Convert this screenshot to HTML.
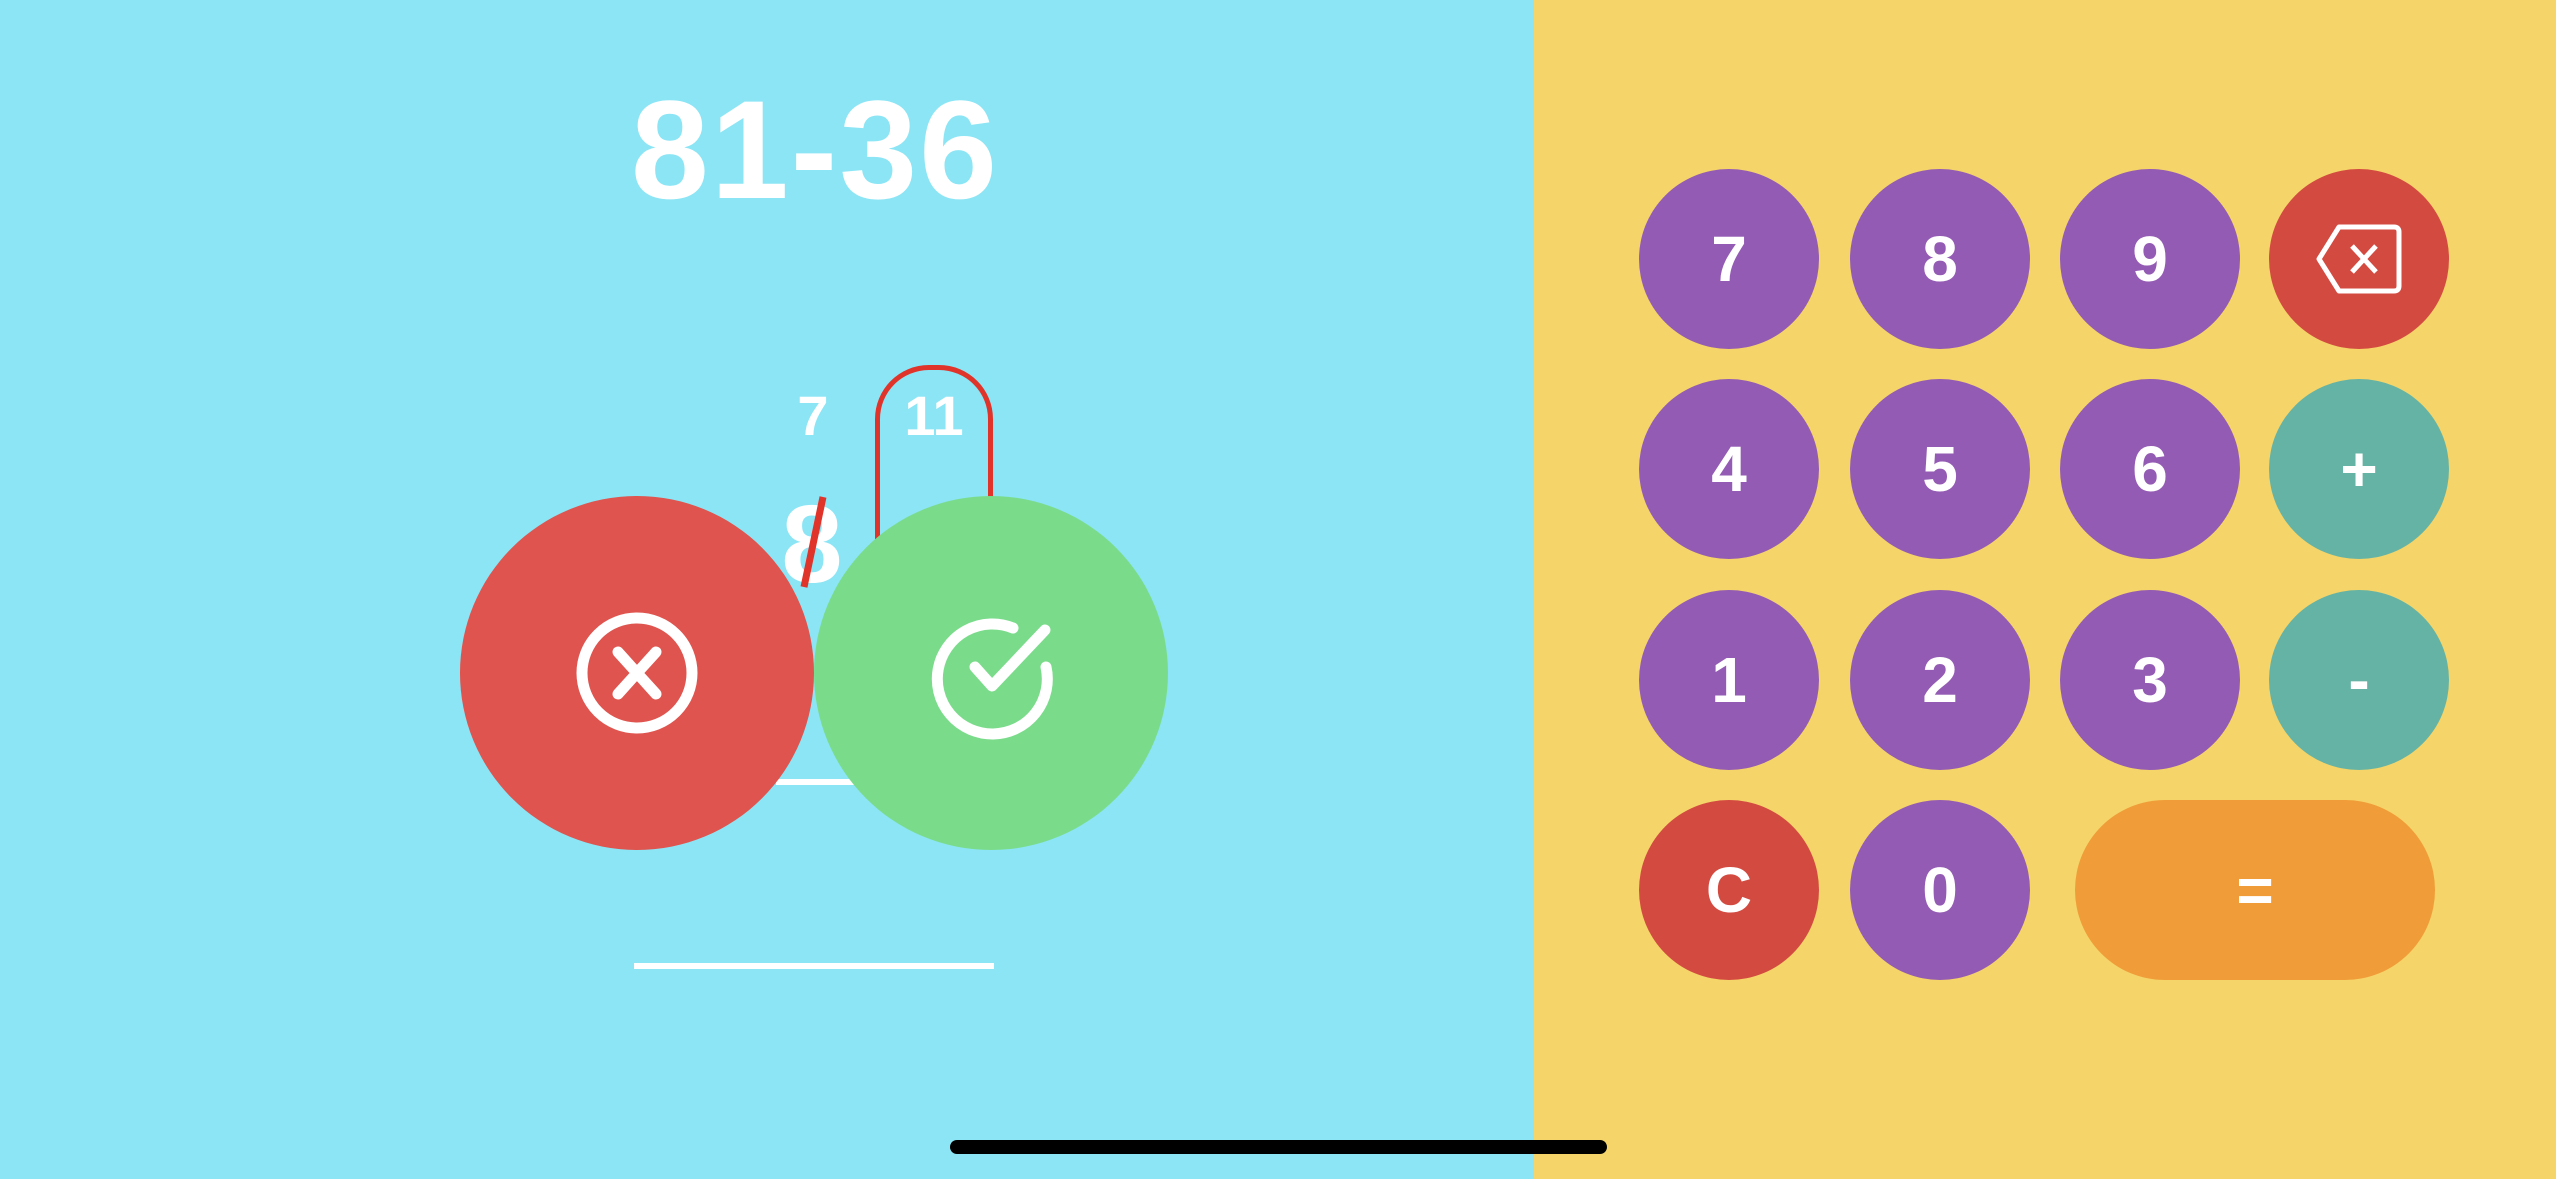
<!DOCTYPE html>
<html><head><meta charset="utf-8"><style>
html,body{margin:0;padding:0;width:2556px;height:1179px;overflow:hidden;font-family:"Liberation Sans",Arial,Helvetica,sans-serif;}
.l{position:absolute;left:0;top:0;width:1534px;height:1179px;background:#8BE5F5;}
.r{position:absolute;left:1534px;top:0;width:1022px;height:1179px;background:#F5D469;}
.t{position:absolute;color:#fff;font-weight:700;text-align:center;line-height:1;font-family:"Liberation Sans",Arial,Helvetica,sans-serif;}
.b{position:absolute;width:180px;height:180px;border-radius:50%;color:#fff;font-weight:700;font-size:64px;display:flex;align-items:center;justify-content:center;font-family:"Liberation Sans",Arial,Helvetica,sans-serif;}
.p{background:#935BB3}.g{background:#65B3A4}.rd{background:#D34A40}
</style></head><body>
<div class="l"></div><div class="r"></div>
<div class="t" style="left:560px;width:510px;top:80px;font-size:140px;letter-spacing:2px;">81-36</div>
<div style="position:absolute;left:875px;top:365px;width:108px;height:260px;border:5px solid #E0342A;border-bottom:none;border-radius:54px 54px 0 0;"></div>
<div class="t" style="left:773px;width:80px;top:388px;font-size:56px;">7</div>
<div class="t" style="left:894px;width:80px;top:388px;font-size:56px;">11</div>
<div class="t" style="left:762px;width:100px;top:490px;font-size:110px;">8</div>
<div class="t" style="left:905px;width:80px;top:490px;font-size:110px;">1</div>
<svg style="position:absolute;left:0;top:0" width="1534" height="1179"><line x1="823" y1="497" x2="804" y2="587" stroke="#E0342A" stroke-width="7"/></svg>
<div style="position:absolute;left:776px;top:779px;width:200px;height:6px;background:#fff"></div>
<div style="position:absolute;left:634px;top:963px;width:360px;height:6px;background:#fff"></div>
<div style="position:absolute;left:460px;top:496px;width:354px;height:354px;border-radius:50%;background:#DF544E"></div>
<div style="position:absolute;left:814px;top:496px;width:354px;height:354px;border-radius:50%;background:#7ADC8B"></div>
<svg style="position:absolute;left:0;top:0" width="1534" height="1179" fill="none" stroke="#fff" stroke-width="11" stroke-linecap="round" stroke-linejoin="round">
<circle cx="637" cy="673" r="55"/>
<path d="M618 652 L656 694 M656 652 L618 694"/>
<path d="M1013 628 A55 55 0 1 0 1046 667"/>
<path d="M975 667 L992 686 L1045 630" />
</svg>
<div class="b p" style="left:1639px;top:169px">7</div>
<div class="b p" style="left:1850px;top:169px">8</div>
<div class="b p" style="left:2060px;top:169px">9</div>
<div class="b rd" style="left:2269px;top:169px"><svg width="90" height="70" viewBox="0 0 90 70" fill="none" stroke="#fff" stroke-width="5" stroke-linejoin="round"><path d="M25 3 H80 Q85 3 85 8 V62 Q85 67 80 67 H25 L5 35 Z"/><path d="M38 22 L62 48 M62 22 L38 48"/></svg></div>
<div class="b p" style="left:1639px;top:379px">4</div>
<div class="b p" style="left:1850px;top:379px">5</div>
<div class="b p" style="left:2060px;top:379px">6</div>
<div class="b g" style="left:2269px;top:379px">+</div>
<div class="b p" style="left:1639px;top:590px">1</div>
<div class="b p" style="left:1850px;top:590px">2</div>
<div class="b p" style="left:2060px;top:590px">3</div>
<div class="b g" style="left:2269px;top:590px">-</div>
<div class="b rd" style="left:1639px;top:800px">C</div>
<div class="b p" style="left:1850px;top:800px">0</div>
<div class="b" style="left:2075px;top:800px;width:360px;border-radius:90px;background:#F09C38">=</div>
<div style="position:absolute;left:950px;top:1140px;width:657px;height:14px;border-radius:7px;background:#000"></div>
</body></html>
